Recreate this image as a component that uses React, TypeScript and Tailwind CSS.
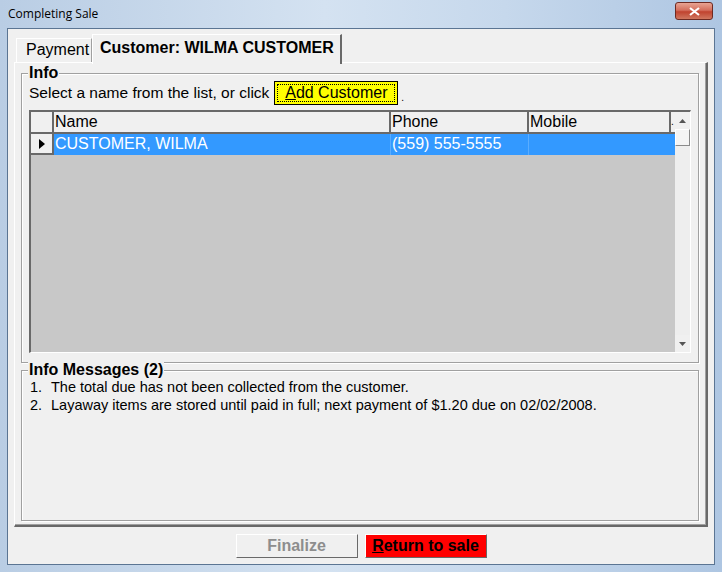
import React from "react";

const messages = [
  "The total due has not been collected from the customer.",
  "Layaway items are stored until paid in full; next payment of $1.20 due on 02/02/2008.",
];

const GroupBox = ({ title, className, children }: { title: string; className?: string; children: React.ReactNode }) => (
  <div className={"relative border border-[#a0a0a0] shadow-[inset_1px_1px_0_#fff,1px_1px_0_#fff] " + (className ?? "")}>
    <div className="absolute -top-[10px] left-[6px] bg-[#f0f0f0] px-[1px] text-[16px] leading-[18px] font-bold">{title}</div>
    {children}
  </div>
);

const CustomerGrid = () => (
  <div className="flex-1 flex border-t-2 border-l-2 border-[#696969] border-b border-r border-b-white border-r-white bg-[#c8c8c8] text-[16px] leading-[20px]">
    <div className="flex-1 flex flex-col">
      <div className="flex h-[22px] bg-[#f0f0f0] border-b-2 border-[#696969]">
        <div className="w-[23px] border-r-2 border-[#696969]" />
        <div className="w-[337px] border-r-2 border-[#696969] pl-[1px]">Name</div>
        <div className="w-[138px] border-r-2 border-[#696969] pl-[1px]">Phone</div>
        <div className="w-[142px] border-r-2 border-[#696969] pl-[1px]">Mobile</div>
        <div className="flex-1 text-[10px]">.</div>
      </div>
      <div className="flex h-[21px]">
        <div className="w-[23px] bg-[#f0f0f0] border-r-2 border-b-2 border-[#696969] flex items-center justify-center">
          <svg width="6" height="10" viewBox="0 0 6 10"><path d="M0 0 L6 5 L0 10 Z" fill="#000" /></svg>
        </div>
        <div className="flex bg-[#3399ff] text-white w-[621px]">
          <div className="w-[337px] border-r border-[#5aadff] pl-[1px]">CUSTOMER, WILMA</div>
          <div className="w-[138px] border-r border-[#5aadff] pl-[1px]">(559) 555-5555</div>
          <div className="flex-1" />
        </div>
      </div>
    </div>
    <div className="w-[17px] flex flex-col bg-[#eeeeee]">
      <div className="h-[17px] flex items-center justify-center bg-[#f0f0f0]">
        <svg width="7" height="4" viewBox="0 0 7 4"><path d="M0 4 L3.5 0 L7 4 Z" fill="#555" /></svg>
      </div>
      <div className="h-[17px] bg-[#f4f4f4] border border-[#8a8a8a] border-t-white border-l-white" />
      <div className="flex-1" />
      <div className="h-[17px] flex items-center justify-center bg-[#f0f0f0]">
        <svg width="7" height="4" viewBox="0 0 7 4"><path d="M0 0 L3.5 4 L7 0 Z" fill="#555" /></svg>
      </div>
    </div>
  </div>
);

export default function App() {
  return (
    <div className="w-[722px] h-[572px] flex flex-col px-[7px] pb-[7px] bg-[linear-gradient(90deg,#b9cde4_0%,#d4e2f1_45%,#c6d8ec_70%,#aec6e2_100%)] font-['Liberation_Sans',Arial,sans-serif] text-black">
      <div className="h-[28px] flex items-start justify-between">
        <div className="pl-[1px] pt-[7px] text-[12px] leading-[14px] font-['Open_Sans','Liberation_Sans',sans-serif]">Completing Sale</div>
        <div className="mt-[2px] mr-[2px] w-[38px] h-[18px] rounded-[3px] border border-[#6d2a22] bg-[linear-gradient(180deg,#e8a493_0%,#d46f5d_45%,#c0432f_55%,#d0775f_100%)] flex items-center justify-center">
          <svg width="11" height="9" viewBox="0 0 11 9">
            <path d="M1 1 L10 8 M10 1 L1 8" stroke="#fff" strokeWidth="2.2" />
          </svg>
        </div>
      </div>
      <div className="flex-1 flex flex-col bg-[#f0f0f0] border border-[#5b7593] px-[6px]">
        <div className="h-[33px] flex items-end text-[16px]">
          <div className="h-[25px] w-[76px] mb-[-1px] ml-[2px] border border-b-0 border-[#a0a0a0] border-t-white border-l-white shadow-[1px_0_0_#696969] pl-[9px] pt-[1px] leading-[20px]">Payment</div>
          <div className="relative z-10 h-[30px] w-[250px] mb-[-2px] bg-[#f0f0f0] border-t border-l border-white border-r-2 border-r-[#696969] pl-[7px] pt-[3px] leading-[20px] font-bold">Customer: WILMA CUSTOMER</div>
        </div>
        <div className="h-[465px] flex flex-col border-t border-l border-white border-r-2 border-b-2 border-r-[#696969] border-b-[#696969] shadow-[inset_-1px_-1px_0_#a0a0a0] px-[6px] pt-[10px]">
          <GroupBox title="Info" className="h-[290px] flex flex-col px-[7px] pt-[7px] pb-[9px] mr-[1px]">
            <div className="flex items-center h-[24px] text-[16px] mb-[5px]">
              <span className="mr-[5px] text-[15.5px]">Select a name from the list, or click</span>
              <div className="w-[124px] h-[24px] bg-[#ffff00] border border-black p-[2px]">
                <div className="h-full border border-dotted border-black flex items-center justify-center leading-[18px]">
                  <span><span className="underline">A</span>dd Customer</span>
                </div>
              </div>
              <span className="ml-[3px] text-[10px] self-end">.</span>
            </div>
            <CustomerGrid />
          </GroupBox>
          <GroupBox title="Info Messages (2)" className="mt-[7px] h-[151px] mr-[1px] pt-[7px] pl-[8px] text-[14.5px] leading-[18px]">
            {messages.map((m, i) => (
              <div key={i} className="flex">
                <span className="w-[21px]">{i + 1}.</span>
                <span>{m}</span>
              </div>
            ))}
          </GroupBox>
        </div>
        <div className="flex-1 flex items-center justify-center gap-[7px] text-[16px] font-bold">
          <div className="w-[122px] h-[24px] bg-[#f0f0f0] border border-white border-r-[#696969] border-b-[#696969] flex items-center justify-center text-[#8d8d8d]">Finalize</div>
          <div className="w-[122px] h-[24px] bg-[#ff0000] border border-white border-r-[#696969] border-b-[#696969] flex items-center justify-center">
            <span><span className="underline">R</span>eturn to sale</span>
          </div>
        </div>
      </div>
    </div>
  );
}
